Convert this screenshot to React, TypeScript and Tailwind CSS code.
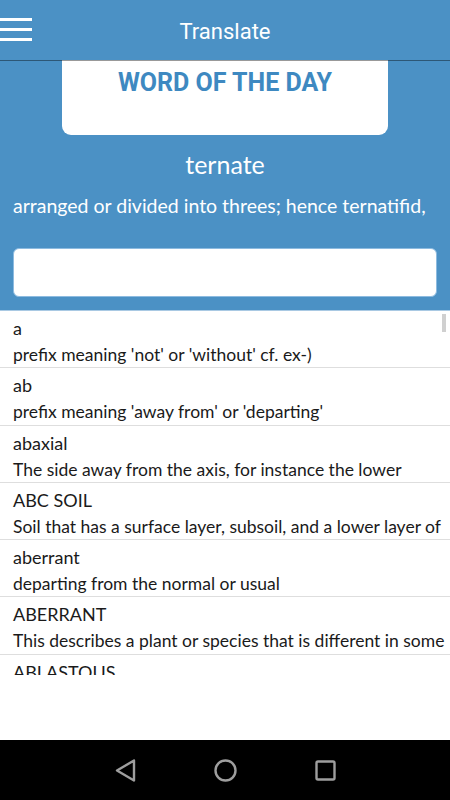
import React from "react";

const entries = [
  { word: "a", desc: "prefix meaning 'not' or 'without' cf. ex-)" },
  { word: "ab", desc: "prefix meaning 'away from' or 'departing'" },
  { word: "abaxial", desc: "The side away from the axis, for instance the lower" },
  { word: "ABC SOIL", desc: "Soil that has a surface layer, subsoil, and a lower layer of" },
  { word: "aberrant", desc: "departing from the normal or usual" },
  { word: "ABERRANT", desc: "This describes a plant or species that is different in some" },
  { word: "ABLASTOUS", desc: "Without germ or bud" },
];

const gill = { fontFamily: "Lato, 'Open Sans', sans-serif" };

const App: React.FC = () => {
  return (
    <div className="w-[450px] h-[800px] bg-white flex flex-col overflow-hidden">
      {/* toolbar */}
      <div className="relative z-10 h-[61px] shrink-0 bg-[#4b91c5] bg-clip-padding border-b border-black/40 flex items-center">
        <div className="absolute left-0 top-[18px] flex flex-col gap-[7px]">
          <div className="w-[32px] h-[3px] bg-white" />
          <div className="w-[32px] h-[3px] bg-white" />
          <div className="w-[32px] h-[3px] bg-white" />
        </div>
        <div className="w-full text-center text-white text-[22px] pt-[3px]" style={{ fontFamily: "Roboto, sans-serif" }}>
          Translate
        </div>
      </div>

      {/* word of the day */}
      <div className="-mt-px bg-[#4b91c5] shrink-0 flex flex-col items-center pb-[13px] border-b border-[#a9c9e3]">
        <div className="w-[326px] h-[75px] bg-white rounded-b-[9px] flex justify-center pt-[4px]">
          <span className="text-[#3e89c1] text-[25px] font-bold" style={{ fontFamily: "Roboto, sans-serif" }}>
            WORD OF THE DAY
          </span>
        </div>
        <div className="mt-[13px] text-white text-[25px] leading-[32px]" style={gill}>
          ternate
        </div>
        <div className="self-stretch px-[13px] mt-[13px] text-white text-[19.5px] leading-[26px] whitespace-nowrap" style={gill}>
          arranged or divided into threes; hence ternatifid,
        </div>
        <div className="self-stretch mx-[13px] mt-[29px] h-[49px] bg-white rounded-[6px] border border-[#8dbbe0]" />
      </div>

      {/* list */}
      <div className="relative h-[364px] shrink-0 overflow-hidden" style={gill}>
        <div className="absolute right-[4px] top-[3px] w-[4px] h-[18px] bg-[#d0d0d0]" />
        {entries.map((e) => (
          <div key={e.word} className="h-[57.3px] border-b border-[#dedede] px-[13px] pt-[3px] text-[#1a1a1a]">
            <div className="text-[18px] leading-[29px] whitespace-nowrap">{e.word}</div>
            <div className="text-[17.5px] leading-[24px] whitespace-nowrap">{e.desc}</div>
          </div>
        ))}
      </div>

      <div className="flex-1" />

      {/* nav bar */}
      <div className="h-[60px] shrink-0 bg-black flex items-center justify-center gap-[73px]">
        <svg width="27" height="27" viewBox="0 0 27 27">
          <path d="M22 3.5 L5 13.5 L22 23.5 Z" fill="none" stroke="#9e9e9e" strokeWidth="2.4" strokeLinejoin="round" />
        </svg>
        <svg width="27" height="27" viewBox="0 0 27 27">
          <circle cx="13.5" cy="13.5" r="10" fill="none" stroke="#9e9e9e" strokeWidth="2.4" />
        </svg>
        <svg width="27" height="27" viewBox="0 0 27 27">
          <rect x="4.5" y="4.5" width="18" height="18" rx="1.5" fill="none" stroke="#9e9e9e" strokeWidth="2.4" />
        </svg>
      </div>
    </div>
  );
};

export default App;
